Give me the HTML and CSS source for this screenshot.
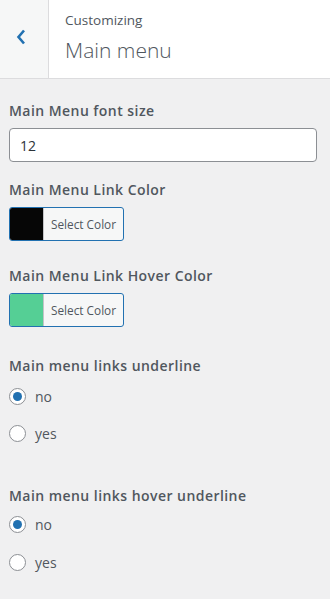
FILE: index.html
```html
<!DOCTYPE html>
<html lang="en">
<head>
<meta charset="utf-8">
<title>Customizing Main menu</title>
<link rel="stylesheet" href="styles.css">
</head>
<body>
<header class="head">
  <button class="back" aria-label="Back">
    <svg width="10" height="16" viewBox="0 0 10 16"><path d="M8 1.5 L2.5 8 L8 14.5" fill="none" stroke="#2271b1" stroke-width="2.6" stroke-linejoin="miter"/></svg>
  </button>
  <div class="info">
    <div class="action">Customizing</div>
    <h3 class="title">Main menu</h3>
  </div>
</header>
<main class="controls">
  <div class="control c-size">
    <label class="ctitle">Main Menu font size</label>
    <input class="text" type="text" value="12">
  </div>
  <div class="control c-link">
    <div class="ctitle">Main Menu Link Color</div>
    <button class="color"><span class="swatch swatch-black"></span><span class="ctext">Select Color</span></button>
  </div>
  <div class="control c-hover">
    <div class="ctitle">Main Menu Link Hover Color</div>
    <button class="color"><span class="swatch swatch-green"></span><span class="ctext">Select Color</span></button>
  </div>
  <div class="control c-under">
    <div class="ctitle">Main menu links underline</div>
    <label class="radio"><span class="dot checked"></span>no</label>
    <label class="radio"><span class="dot"></span>yes</label>
  </div>
  <div class="control c-hunder">
    <div class="ctitle">Main menu links hover underline</div>
    <label class="radio"><span class="dot checked"></span>no</label>
    <label class="radio"><span class="dot"></span>yes</label>
  </div>
</main>
</body>
</html>
```

FILE: styles.css
```css
html, body {
  margin: 0;
  padding: 0;
}
body {
  background: #f0f0f1;
  font-family: "Open Sans", "Noto Sans", sans-serif;
  color: #50575e;
  width: 330px;
  height: 599px;
  overflow: hidden;
}
.head {
  display: flex;
  height: 78px;
  background: #fff;
  border-bottom: 1px solid #dcdcde;
}
.back {
  width: 49px;
  flex: none;
  background: #f6f7f7;
  border: 0;
  border-right: 1px solid #dcdcde;
  padding: 0 0 0 16px;
  margin: 0;
  display: flex;
  align-items: center;
  justify-content: flex-start;
}
.back svg {
  display: block;
  margin-top: -5px;
}
.info {
  padding-left: 16px;
}
.action {
  font-size: 13.5px;
  line-height: 20px;
  margin-top: 10px;
  color: #50575e;
}
.title {
  margin: 0;
  font-size: 21px;
  font-weight: 300;
  line-height: 30px;
  margin-top: 5px;
  color: #50575e;
}
.controls {
  padding: 0 13px 0 9px;
}
.ctitle {
  display: block;
  font-size: 14px;
  font-weight: 600;
  line-height: 20px;
  letter-spacing: 0.45px;
  color: #50575e;
  margin-bottom: 7px;
}
.c-size { padding-top: 22px; }
.c-link { margin-top: 18px; }
.c-hover { margin-top: 25px; }
.c-under { margin-top: 29px; }
.c-hunder { margin-top: 40px; }
.c-under .ctitle { margin-bottom: 8px; }
.c-hunder .ctitle { margin-bottom: 7px; }
.text {
  display: block;
  box-sizing: border-box;
  width: 100%;
  height: 34px;
  margin: 0;
  padding: 0 10px;
  border: 1px solid #8c8f94;
  border-radius: 4px;
  background: #fff;
  font-family: inherit;
  font-size: 14px;
  color: #2c3338;
}
.color {
  display: flex;
  align-items: stretch;
  box-sizing: border-box;
  height: 34px;
  width: 115px;
  padding: 0;
  margin: 0;
  border: 1px solid #2271b1;
  border-radius: 3px;
  background: #f6f7f7;
  overflow: hidden;
  font-family: inherit;
}
.swatch {
  width: 33px;
  flex: none;
  border-right: 1px solid #c3c4c7;
}
.swatch-black { background: #060606; }
.swatch-green { background: #55cf95; }
.ctext {
  flex: 1;
  display: flex;
  align-items: center;
  padding-left: 7px;
  font-size: 11.8px;
  color: #50575e;
  white-space: nowrap;
}
.radio {
  display: flex;
  align-items: center;
  height: 24px;
  font-size: 14px;
  color: #50575e;
  margin-bottom: 13.5px;
}
.dot {
  box-sizing: border-box;
  width: 17px;
  height: 17px;
  border: 1px solid #8c8f94;
  border-radius: 50%;
  background: #fff;
  margin-right: 9px;
  display: flex;
  align-items: center;
  justify-content: center;
}
.dot.checked::before {
  content: "";
  width: 9px;
  height: 9px;
  border-radius: 50%;
  background: #2271b1;
}
```
